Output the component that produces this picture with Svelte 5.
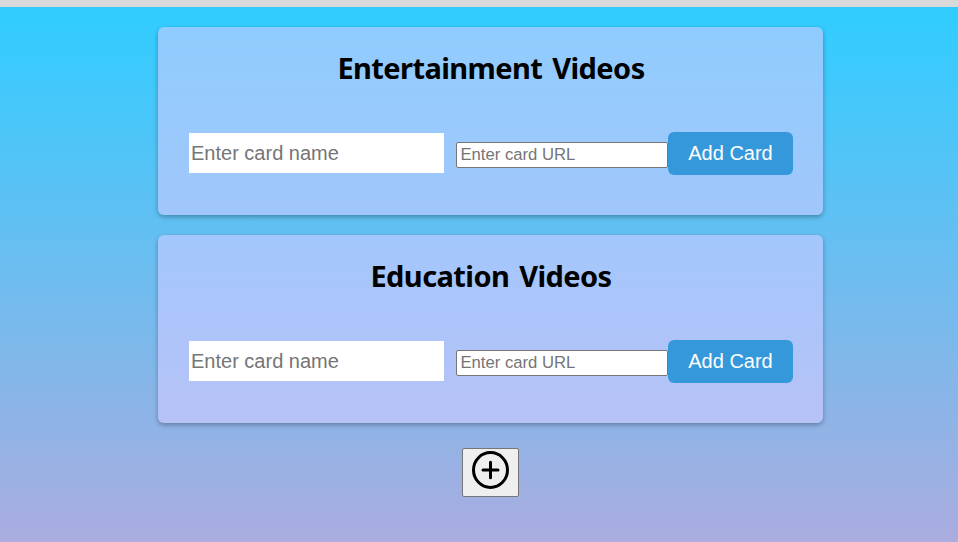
<script>
  const sections = [
    { title: 'Entertainment Videos', tone: 'first' },
    { title: 'Education Videos', tone: 'second' }
  ];
</script>

<div class="page">
  <div class="topbar"></div>
  <main>
    {#each sections as section}
      <section class={section.tone}>
        <h2>{section.title}</h2>
        <form onsubmit={(e) => e.preventDefault()}>
          <input class="name" type="text" placeholder="Enter card name" />
          <input class="url" type="text" placeholder="Enter card URL" />
          <button class="add" type="submit">Add Card</button>
        </form>
      </section>
    {/each}
    <button class="plus" aria-label="Add section">
      <svg width="37" height="38" viewBox="0 0 37 38" fill="none" stroke="#000" stroke-width="3" stroke-linecap="round">
        <ellipse cx="18.5" cy="19" rx="17" ry="17.4" />
        <path d="M18.5 11.2v15.6M11 19h15" />
      </svg>
    </button>
  </main>
</div>

<style>
  :global(body) { margin: 0; overflow: hidden; }
  .page {
    height: 542px;
    display: flex;
    flex-direction: column;
    font-family: "Liberation Sans", Arial, sans-serif;
  }
  .topbar { height: 7px; flex: none; background: #d9d9d9; }
  main {
    flex: 1;
    display: flex;
    flex-direction: column;
    align-items: center;
    gap: 20px;
    padding: 20px 0 0 23px;
    background: linear-gradient(#33ccff 0%, #33ccff 3%, #abacdf 100%);
  }
  section {
    box-sizing: border-box;
    width: 665px;
    height: 188px;
    padding: 20px 30px 0 31px;
    border-radius: 6px;
    box-shadow: 0 2px 5px rgba(0, 0, 0, 0.3);
  }
  .first { background: linear-gradient(#90ccff, #a1c7fb); }
  .second { background: linear-gradient(#a3c7fc, #b7c2f7); }
  h2 {
    margin: 0;
    height: 42px;
    font: bold 29px/42px "Noto Sans", "Open Sans", sans-serif;
    letter-spacing: -0.58px;
    word-spacing: 3px;
    text-align: center;
    white-space: nowrap;
    color: #000;
  }
  form { display: flex; margin-top: 43px; }
  input {
    box-sizing: border-box;
    font-family: inherit;
    background: #fff;
    outline: none;
  }
  input::placeholder { color: #757575; opacity: 1; }
  .name {
    width: 255px;
    height: 40px;
    margin: 1px 12px 0 0;
    padding: 0 2px;
    border: 0;
    font-size: 20px;
  }
  .url {
    width: 212px;
    height: 26px;
    margin-top: 10px;
    padding: 0 3.5px;
    border: 1px solid #767676;
    border-radius: 2px;
    font-size: 16.67px;
  }
  .add {
    width: 125px;
    height: 43px;
    padding: 0;
    border: 0;
    border-radius: 6px;
    background: #3598db;
    color: #fff;
    font: 20px "Liberation Sans", Arial, sans-serif;
  }
  .plus {
    box-sizing: border-box;
    width: 57px;
    height: 49px;
    margin-top: 5px;
    padding: 2px 0 0;
    display: flex;
    justify-content: center;
    align-items: flex-start;
    border: 1px solid #767676;
    border-radius: 2px;
    background: #efefef;
  }
</style>
